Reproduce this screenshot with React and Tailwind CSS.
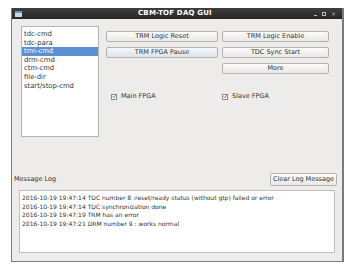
const items = ['tdc-cmd', 'tdc-para', 'trm-cmd', 'drm-cmd', 'ctm-cmd', 'file-dir', 'start/stop-cmd']

const logs = [
  '2016-10-19 19:47:14 TDC number 8 :reset/ready status (without gtp) failed or error',
  '2016-10-19 19:47:14 TDC synchronization done',
  '2016-10-19 19:47:19 TRM has an error',
  '2016-10-19 19:47:21 DRM number 9 : works normal',
]

function Btn({ children, className = '', active }) {
  return (
    <div
      className={`h-[11px] flex items-center justify-center rounded-[2px] border border-[#b4b2ae] text-[6.5px] text-[#2e3436] ${
        active ? 'bg-gradient-to-b from-[#f4f7fa] to-[#dfe5ec]' : 'bg-gradient-to-b from-[#fbfbfa] to-[#e9e8e6]'
      } ${className}`}
    >
      {children}
    </div>
  )
}

function Check({ label }) {
  return (
    <div className="flex items-center gap-[4px] text-[6.5px] text-[#2e3436]">
      <span className="w-[6px] h-[6px] border border-[#8a8a8a] bg-white flex items-center justify-center">
        <svg width="5" height="5" viewBox="0 0 5 5">
          <path d="M0.7 2.6 L2 3.9 L4.3 0.9" stroke="#333" strokeWidth="0.9" fill="none" />
        </svg>
      </span>
      {label}
    </div>
  )
}

export default function App() {
  return (
    <div className="w-[353px] h-[269px] bg-white pt-[8px] pl-[11px] font-['DejaVu_Sans',sans-serif]">
      <div className="w-[333px] h-[254px] flex flex-col bg-[#edecea] border-l border-b border-r-2 border-[#7a7a7a]">
        <div className="h-[11px] shrink-0 flex items-center bg-gradient-to-b from-[#3f3f3f] to-[#262626] px-[3px]">
          <div className="w-[7px] h-[6px] bg-[#c8d8ec] border-t-2 border-[#6f9ad0]" />
          <div className="flex-1 text-center text-white font-bold text-[7px] tracking-[0.2px] pl-[14px]">CBM-TOF DAQ GUI</div>
          <div className="flex items-center gap-[5px] text-[#bcbcbc] text-[6px] pr-[3px]">
            <span className="w-[3px] h-px bg-[#bcbcbc] mt-[3px]" />
            <span className="w-[4px] h-[4px] border border-[#bcbcbc]" />
            <span className="leading-none">×</span>
          </div>
        </div>

        <div className="flex">
          <div className="ml-[9px] mt-[7px] w-[78px] h-[111px] bg-white border border-[#b8b6b2] pt-[3px] text-[6.8px] text-[#2e3436] leading-[8.6px]">
            {items.map(it => (
              <div key={it} className={`px-[2px] ${it === 'trm-cmd' ? 'bg-[#5c8fd2] text-white' : ''}`}>{it}</div>
            ))}
          </div>
          <div className="ml-[7px] mt-[12px] flex flex-col gap-[5px]">
            <div className="flex gap-[4px]">
              <Btn className="w-[112px]">TRM Logic Reset</Btn>
              <Btn className="w-[107px]">TRM Logic Enable</Btn>
            </div>
            <div className="flex gap-[4px]">
              <Btn className="w-[112px]" active>TRM FPGA Pause</Btn>
              <Btn className="w-[107px]">TDC Sync Start</Btn>
            </div>
            <div className="flex gap-[4px]">
              <div className="w-[112px]" />
              <Btn className="w-[107px]">More</Btn>
            </div>
            <div className="flex mt-[13px] pl-[5px]">
              <div className="w-[111px]"><Check label="Main FPGA" /></div>
              <Check label="Slave FPGA" />
            </div>
          </div>
        </div>

        <div className="flex items-center justify-between mt-[36px] pl-[2px] pr-[5px]">
          <span className="text-[6.5px] text-[#2e3436]">Message Log</span>
          <Btn className="w-[67px] h-[13px]">Clear Log Message</Btn>
        </div>

        <div className="mx-[7px] mt-[4px] h-[63px] bg-white border border-[#c0beba] pt-[3px] px-[2px] text-[6px] text-[#2e3436] leading-[8.6px]">
          {logs.map(l => (
            <div key={l} className="whitespace-nowrap">{l}</div>
          ))}
        </div>
      </div>
    </div>
  )
}
